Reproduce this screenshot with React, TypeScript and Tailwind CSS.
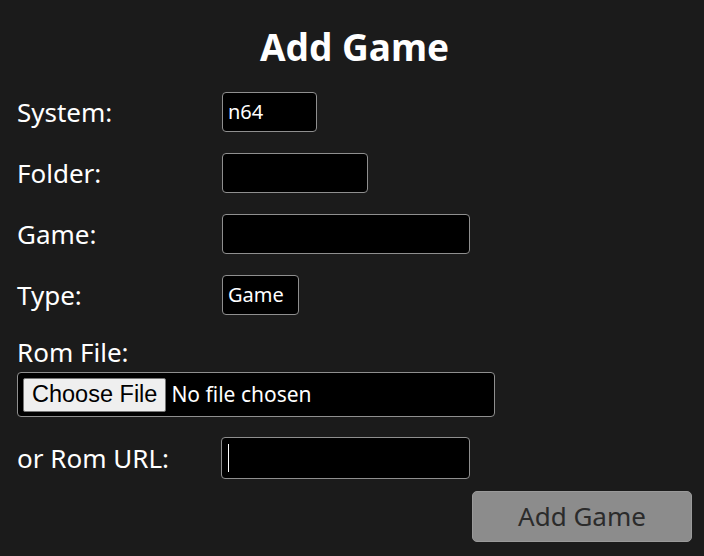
const font = "font-['Noto_Sans',sans-serif]";

function Row({ label, children }: { label: string; children: React.ReactNode }) {
  return (
    <div className="flex items-center mt-[21px] first:mt-0">
      <label className="w-[205px] text-[26px] leading-none text-white">{label}</label>
      {children}
    </div>
  );
}

function TextBox({ width, value, caret }: { width: string; value?: string; caret?: boolean }) {
  return (
    <div
      className={`${width} h-[40px] bg-black border border-[#8f8f8f] rounded-[4px] flex items-center px-[5px] text-[20px] text-white`}
    >
      {value}
      {caret && <span className="w-px h-[26px] bg-white" />}
    </div>
  );
}

export default function App() {
  return (
    <div className={`min-h-[556px] bg-[#1b1b1b] ${font} pl-[17px] pr-[12px] pt-[19px]`}>
      <h1 className="text-center text-[37px] font-bold leading-[56px] text-white">Add Game</h1>

      <div className="mt-[17px] flex flex-col">
        <Row label="System:">
          <TextBox width="w-[95px]" value="n64" />
        </Row>
        <Row label="Folder:">
          <TextBox width="w-[146px]" />
        </Row>
        <Row label="Game:">
          <TextBox width="w-[248px]" />
        </Row>
        <Row label="Type:">
          <TextBox width="w-[77px]" value="Game" />
        </Row>
      </div>

      <div className="mt-[21px] text-[26px] leading-[32px] text-white">Rom File:</div>
      <div className="mt-[4px] w-[478px] h-[45px] bg-black border border-[#8f8f8f] rounded-[4px] flex items-center pl-[5px]">
        <div className="h-[34px] px-[8px] flex items-center bg-[#efefef] border border-[#767676] rounded-[2px] text-[23.5px] text-black font-['Liberation_Sans',sans-serif]">
          Choose File
        </div>
        <span className="ml-[5px] text-[21px] text-white">No file chosen</span>
      </div>

      <div className="flex items-center mt-[20px]">
        <label className="w-[204px] text-[26px] leading-none text-white">or Rom URL:</label>
        <div className="w-[249px] h-[42px] bg-black border border-[#8f8f8f] rounded-[4px] flex items-center px-[6px]">
          <span className="w-px h-[28px] bg-white" />
        </div>
      </div>

      <div className="flex justify-end mt-[12px]">
        <button className="w-[220px] h-[51px] bg-[#8c8c8c] border border-[#9a9a9a] rounded-[5px] text-[26px] text-[#2b2b2b]">
          Add Game
        </button>
      </div>
    </div>
  );
}
